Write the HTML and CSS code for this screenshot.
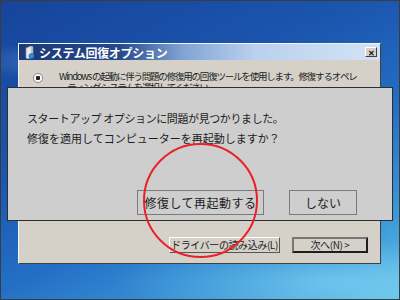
FILE: index.html
```html
<!DOCTYPE html>
<html lang="ja">
<head>
    <meta charset="UTF-8">
    <title>システム回復オプション</title>
    <link rel="stylesheet" href="styles.css">
</head>
<body>
    <div class="desktop">
        <!-- recovery options window -->
        <div class="window">
            <div class="titlebar">
                <svg class="app-icon" width="10" height="13" viewBox="0 0 10 13">
                    <path d="M1 2 L6 0 L8 1 L8 11 L3 13 L1 12 Z" fill="#e6e8ec" stroke="#8a9099" stroke-width="0.7"/>
                    <path d="M6 0 L8 1 L8 11 L6 10 Z" fill="#b5bcc6"/>
                    <circle cx="6.5" cy="10" r="2.6" fill="#2f8fd8" stroke="#1c5f9e" stroke-width="0.6"/>
                </svg>
                <span class="title">システム回復オプション</span>
                <span class="close-btn">✕</span>
            </div>
            <div class="window-body">
                <div class="option-row">
                    <span class="radio"></span>
                    <p class="option-text">Windows の起動に伴う問題の修復用の回復ツールを使用します。修復するオペレ<br>ーティング システムを選択してください。</p>
                </div>
                <div class="window-buttons">
                    <button class="win-btn">ドライバーの読み込み(L)</button>
                    <button class="win-btn default">次へ(N) &gt;</button>
                </div>
            </div>
        </div>

        <!-- startup repair prompt -->
        <div class="prompt">
            <div class="prompt-text">
                <p class="tight">スタートアップ オプションに問題が見つかりました。</p>
                <p>修復を適用してコンピューターを再起動しますか？</p>
            </div>
            <div class="prompt-buttons">
                <button class="prompt-btn wide">修復して再起動する</button>
                <button class="prompt-btn">しない</button>
            </div>
        </div>

        <div class="highlight"></div>
    </div>
</body>
</html>
```

FILE: styles.css
```css
/* === PAGE === */
body {
    margin: 0;
    font-family: "Noto Sans CJK JP", "Liberation Sans", sans-serif;
}

.desktop {
    position: relative;
    box-sizing: border-box;
    width: 400px;
    height: 300px;
    border: 1px solid #3c3c3c;
    overflow: hidden;
    padding: 42px 0 0 17px;
    background:
        radial-gradient(ellipse 140px 20px at 90px 60px, rgba(140, 190, 240, 0.35), transparent),
        radial-gradient(ellipse 220px 40px at 330px 280px, rgba(150, 225, 250, 0.45), transparent),
        linear-gradient(155deg, #17449a 0%, #1b55ae 35%, #246fc6 60%, #3b98d8 82%, #63c2ea 100%);
}

/* === RECOVERY WINDOW === */
.window {
    box-sizing: border-box;
    width: 363px;
    height: 221px;
    display: flex;
    flex-direction: column;
    background-color: #d5d1c9;
    border: 1px solid;
    border-color: #f4f4f4 #404040 #404040 #f4f4f4;
}

.titlebar {
    height: 16px;
    display: flex;
    align-items: center;
    padding: 0 3px 0 6px;
    background: linear-gradient(90deg, #1b3a76 0%, #27498a 28%, #7fa3d4 45%, #b9d0ee 65%, #d3e3f5 100%);
}

.app-icon {
    margin-right: 4px;
}

.title {
    flex: 1;
    font-size: 12px;
    font-weight: bold;
    color: #fff;
    letter-spacing: -0.3px;
}

.close-btn {
    box-sizing: border-box;
    width: 12px;
    height: 10px;
    display: flex;
    align-items: center;
    justify-content: center;
    font-size: 8px;
    font-weight: bold;
    color: #111;
    background-color: #d5d1c9;
    border: 1px solid;
    border-color: #fff #404040 #404040 #fff;
}

.window-body {
    flex: 1;
    display: flex;
    flex-direction: column;
    padding: 11px 12px 10px 14px;
}

.option-row {
    display: flex;
    align-items: flex-start;
}

.radio {
    flex-shrink: 0;
    box-sizing: border-box;
    width: 10px;
    height: 10px;
    margin: 2px 16px 0 0;
    border-radius: 50%;
    border: 1px solid #8a8a8a;
    background: radial-gradient(circle, #222 0 2px, #fff 2.5px);
}

.option-text {
    margin: 0;
    font-size: 9.5px;
    line-height: 11px;
    color: #222;
    white-space: nowrap;
    letter-spacing: -1.2px;
}

.window-buttons {
    margin-top: auto;
    display: flex;
    justify-content: flex-end;
    gap: 12px;
}

.win-btn {
    box-sizing: border-box;
    height: 16px;
    padding: 0;
    font-family: inherit;
    font-size: 10px;
    line-height: 12px;
    color: #222;
    background-color: #d5d1c9;
    border: 1px solid;
    border-color: #fff #555 #555 #fff;
    width: 111px;
    letter-spacing: -0.4px;
}

.win-btn.default {
    width: 76px;
    border: 2px solid #1e1e1e;
    border-top-color: #777;
    border-left-color: #777;
}

/* === REPAIR PROMPT === */
.prompt {
    position: absolute;
    left: 6px;
    top: 86px;
    box-sizing: border-box;
    width: 386px;
    height: 134px;
    display: flex;
    flex-direction: column;
    padding: 20px 35px 5px 19px;
    background-color: #cecece;
    border: 1px solid #2e2e2e;
}

.prompt-text p {
    margin: 0;
    font-size: 11px;
    line-height: 20px;
    color: #1c1c1c;
    white-space: nowrap;
}

.prompt-text .tight {
    letter-spacing: -0.4px;
}

.prompt-buttons {
    margin-top: auto;
    display: flex;
    justify-content: flex-end;
    gap: 25px;
}

.prompt-btn {
    box-sizing: border-box;
    width: 68px;
    height: 25px;
    padding: 0;
    font-family: inherit;
    font-size: 12px;
    color: #1c1c1c;
    background-color: #cecece;
    border: 1px solid #7a7a7a;
}

.prompt-btn.wide {
    width: 127px;
    letter-spacing: 0.5px;
}

/* === RED MARK === */
.highlight {
    position: absolute;
    left: 142px;
    top: 142px;
    box-sizing: border-box;
    width: 115px;
    height: 115px;
    border: 2px solid #ea2228;
    border-radius: 50%;
}
```
